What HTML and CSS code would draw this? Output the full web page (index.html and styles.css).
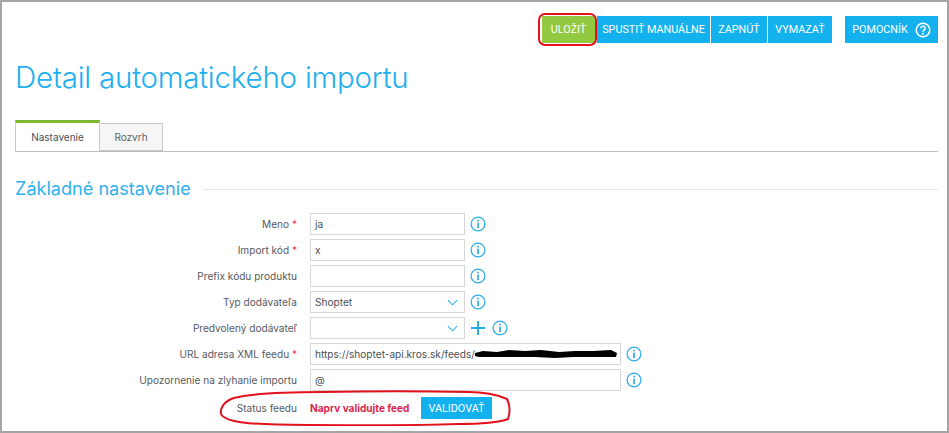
FILE: index.html
```html
<!DOCTYPE html>
<html lang="sk">
<head>
<meta charset="utf-8">
<title>Detail automatického importu</title>
<link rel="stylesheet" href="styles.css">
</head>
<body>
<div class="frame">
  <div class="toolbar">
    <span class="annot-wrap">
      <button class="btn btn-green">ULOŽIŤ</button>
      <span class="ring-save"></span>
    </span>
    <button class="btn btn-w113">SPUSTIŤ MANUÁLNE</button>
    <button class="btn btn-w56">ZAPNÚŤ</button>
    <button class="btn btn-w64">VYMAZAŤ</button>
    <button class="btn btn-help">POMOCNÍK
      <svg class="help-icon" viewBox="0 0 16 16" width="16" height="16"><circle cx="8" cy="8" r="6.8" fill="none" stroke="#fff" stroke-width="1.6"/><path d="M5.9 6.3a2.1 2.1 0 1 1 3.3 1.7c-.8.5-1.2.9-1.2 1.8" fill="none" stroke="#fff" stroke-width="1.5"/><circle cx="8" cy="11.8" r="1" fill="#fff"/></svg>
    </button>
  </div>
  <h1 class="title">Detail automatického importu</h1>
  <div class="tabs">
    <div class="tab tab-active">Nastavenie</div>
    <div class="tab">Rozvrh</div>
  </div>
  <div class="section-head"><h2>Základné nastavenie</h2><span class="section-line"></span></div>
  <div class="form">
    <div class="row">
      <label class="lbl">Meno <span class="req">*</span></label>
      <div class="field w155">ja</div>
      <svg class="info" viewBox="0 0 16 16"><use href="#i"/></svg>
    </div>
    <div class="row">
      <label class="lbl">Import kód <span class="req">*</span></label>
      <div class="field w155">x</div>
      <svg class="info" viewBox="0 0 16 16"><use href="#i"/></svg>
    </div>
    <div class="row">
      <label class="lbl">Prefix kódu produktu</label>
      <div class="field w155"></div>
      <svg class="info" viewBox="0 0 16 16"><use href="#i"/></svg>
    </div>
    <div class="row">
      <label class="lbl">Typ dodávateľa</label>
      <div class="field w155 select">Shoptet<svg class="chev" viewBox="0 0 12 7"><path d="M1 1l5 5 5-5" fill="none" stroke="#1fb0ee" stroke-width="1.1"/></svg></div>
      <svg class="info" viewBox="0 0 16 16"><use href="#i"/></svg>
    </div>
    <div class="row">
      <label class="lbl">Predvolený dodávateľ</label>
      <div class="field w155 select"><svg class="chev" viewBox="0 0 12 7"><path d="M1 1l5 5 5-5" fill="none" stroke="#1fb0ee" stroke-width="1.1"/></svg></div>
      <svg class="plus" viewBox="0 0 14 14"><path d="M7 0v14M0 7h14" stroke="#1fb0ee" stroke-width="1.9" fill="none"/></svg>
      <svg class="info info-near" viewBox="0 0 16 16"><use href="#i"/></svg>
    </div>
    <div class="row">
      <label class="lbl">URL adresa XML feedu <span class="req">*</span></label>
      <div class="field w311 url">https://shoptet-api.kros.sk/feeds/<svg class="scribble" viewBox="0 0 142 9" preserveAspectRatio="none"><path d="M0 4 8 2 22 3 34 1 50 2 66 1 84 3 100 2 118 2 136 1 142 4 141 8 120 8 98 8 80 9 60 8 40 8 20 8 4 8 0 7z" fill="#000"/></svg></div>
      <svg class="info" viewBox="0 0 16 16"><use href="#i"/></svg>
    </div>
    <div class="row">
      <label class="lbl">Upozornenie na zlyhanie importu</label>
      <div class="field w311">@</div>
      <svg class="info" viewBox="0 0 16 16"><use href="#i"/></svg>
    </div>
    <div class="row status-row">
      <label class="lbl">Status feedu</label>
      <strong class="status">Naprv validujte feed</strong>
      <button class="btn btn-validate">VALIDOVAŤ</button>
      <svg class="ring-status" viewBox="0 0 294 36" preserveAspectRatio="none"><path d="M3 24C2 18 6 11 16 8 36 3 70 2 104 2c50-1 100-1 146 0 16 0 30 3 39 7 3 6 3 14 1 20-8 3-26 5-50 5-50 2-100 1-150 1-24 0-58 0-74-4C8 29 4 27 3 24z" fill="none" stroke="#e3101e" stroke-width="2"/></svg>
    </div>
  </div>
</div>
<svg class="defs" width="0" height="0"><defs><g id="i"><circle cx="8" cy="8" r="6.9" fill="none" stroke="#2fade9" stroke-width="1.3"/><rect x="7.2" y="6.6" width="1.7" height="5.6" fill="#2fade9"/><rect x="7.2" y="3.7" width="1.7" height="1.7" fill="#2fade9"/></g></defs></svg>
</body>
</html>
```
FILE: styles.css
```css
* { box-sizing: border-box; }
html, body { margin: 0; padding: 0; background: #fff; }
body { width: 949px; height: 433px; overflow: hidden; font-family: Inter, "Liberation Sans", sans-serif; color: #4a4f55; }
.frame { width: 949px; height: 433px; border: 2px solid #a5a5a5; padding: 14px 9px 0 13px; overflow: hidden; position: relative; }
.defs { position: absolute; }
.toolbar { display: flex; justify-content: flex-end; align-items: flex-start; gap: 1px; height: 27px; }
.btn { border: 0; height: 27px; background: #14b1ef; color: #fff; font: 400 10.8px Roboto, Inter, sans-serif; padding: 0; display: flex; align-items: center; justify-content: center; }
.annot-wrap { position: relative; display: block; height: 27px; margin-right: 1px; }
.btn-green { background: #92c940; width: 53px; }
.ring-save { position: absolute; left: -4px; top: -3px; width: 59px; height: 33px; border: 2px solid #e3101e; border-radius: 7px; }
.btn-w113 { width: 113px; }
.btn-w56 { width: 56px; }
.btn-w64 { width: 64px; }
.btn-help { width: 93px; margin-left: 12px; gap: 7px; }
.help-icon { display: block; }
.title { margin: 16px 0 0; font: 300 29.5px/36px Inter, sans-serif; color: #22afee; letter-spacing: -0.22px; }
.tabs { display: flex; margin-top: 26px; height: 31px; border-bottom: 1px solid #bdbdbd; align-items: flex-end; }
.tab { height: 28px; width: 63px; background: #f6f6f6; border: 1px solid #c9c9c9; border-left: 0; font: 400 10px/27px Inter, sans-serif; text-align: center; color: #5b5f64; }
.tab-active { width: 85px; height: 31px; background: #fff; border-left: 1px solid #c9c9c9; border-top: 3px solid #7cb82f; border-bottom: 0; line-height: 28px; color: #4a4f55; }
.section-head { display: flex; align-items: center; margin-top: 24px; gap: 13px; }
.section-head h2 { margin: 0; font: 400 18.1px/24px Inter, sans-serif; color: #2fb1ee; white-space: nowrap; }
.section-line { flex: 1; height: 1px; background: #e8e8e8; margin-top: 3px; }
.form { margin-top: 13px; }
.row { display: flex; align-items: center; height: 22px; margin-bottom: 4px; }
.lbl { width: 282px; text-align: right; font: 400 10.1px/22px Inter, sans-serif; color: #565a60; white-space: nowrap; margin-right: 13px; }
.req { color: #e6395a; }
.field { height: 22px; border: 1px solid #d6d6d6; background: #fff; font: 400 10.1px/20px Inter, sans-serif; color: #4a4f55; padding-left: 4px; position: relative; white-space: nowrap; }
.w155 { width: 155px; }
.w311 { width: 311px; }
.select { display: flex; align-items: center; justify-content: space-between; padding-right: 6px; }
.select .chev { margin-left: auto; }
.chev { width: 11px; height: 7px; display: block; }
.info { width: 16px; height: 16px; margin-left: 5px; display: block; }
.plus { width: 14px; height: 14px; margin-left: 6px; display: block; }
.info-near { margin-left: 7px; }
.scribble { position: absolute; left: 164px; top: 5px; width: 142px; height: 9px; display: block; }
.status-row { position: relative; height: 26px; margin-top: 4px; margin-bottom: 0; }
.status { font: 700 10.1px/22px Inter, sans-serif; color: #dc1f4e; width: 111px; white-space: nowrap; }
.btn-validate { width: 71px; height: 22px; }
.ring-status { position: absolute; left: 203px; top: -5px; width: 294px; height: 36px; }
```
